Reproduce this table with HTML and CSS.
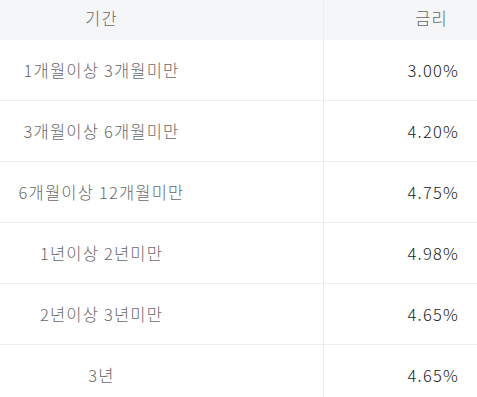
FILE: index.html
```html
<!DOCTYPE html>
<html lang="ko">
<head>
<meta charset="utf-8">
<link rel="stylesheet" href="styles.css">
</head>
<body>
<table class="rates">
  <thead>
    <tr><th class="period">기간</th><th class="rate">금리</th></tr>
  </thead>
  <tbody>
    <tr><td class="period">1개월이상 3개월미만</td><td class="rate">3.00%</td></tr>
    <tr><td class="period">3개월이상 6개월미만</td><td class="rate">4.20%</td></tr>
    <tr><td class="period">6개월이상 12개월미만</td><td class="rate">4.75%</td></tr>
    <tr><td class="period">1년이상 2년미만</td><td class="rate">4.98%</td></tr>
    <tr><td class="period">2년이상 3년미만</td><td class="rate">4.65%</td></tr>
    <tr><td class="period">3년</td><td class="rate">4.65%</td></tr>
  </tbody>
</table>
</body>
</html>
```
FILE: styles.css
```css
html, body {
  margin: 0;
  padding: 0;
  background: #fff;
}
.rates {
  width: 477px;
  border-collapse: collapse;
  table-layout: fixed;
  font-family: "Noto Sans CJK KR", "Noto Sans", sans-serif;
  font-size: 16.5px;
  font-weight: 300;
  letter-spacing: 1.2px;
  word-spacing: -1px;
}
.rates th {
  height: 37px;
  padding: 0 0 3px 0;
  background: #f5f6f8;
  color: #666;
  font-weight: 300;
  vertical-align: middle;
  line-height: 1;
}
.rates td {
  height: 60px;
  padding: 0;
  border-bottom: 1px solid #ececec;
  vertical-align: middle;
  line-height: 1;
}
.rates .period {
  width: 203px;
  padding-right: 120px;
  text-align: center;
  border-right: 1px solid #ececec;
  color: #6a6a6a;
}
.rates td.rate {
  text-align: right;
  padding-right: 18px;
  color: #222;
}
.rates th.rate {
  text-align: right;
  padding-right: 29px;
}
```
